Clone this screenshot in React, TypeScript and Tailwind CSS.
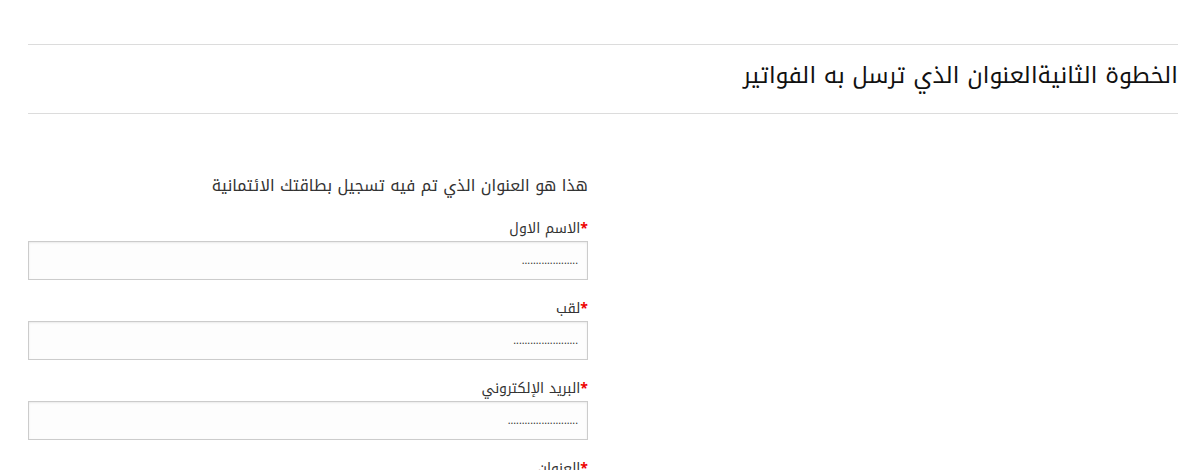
export default function App() {
  const fields = [
    { label: "الاسم الاول", placeholder: "...................." },
    { label: "لقب", placeholder: "......................." },
    { label: "البريد الإلكتروني", placeholder: "........................." },
    { label: "العنوان", placeholder: "........................." },
  ];

  return (
    <div
      dir="rtl"
      className="h-[470px] overflow-hidden bg-white pl-[28px] pr-[22px] pt-[44px] font-['Noto_Kufi_Arabic','Noto_Sans_Arabic','DejaVu_Sans',sans-serif] text-[#222]"
    >
      <div className="border-y border-[#dcdcdc] pb-[21px] pt-[15px]">
        <h2 className="text-[23px] leading-[32px] text-[#111]">
          الخطوة الثانيةالعنوان الذي ترسل به الفواتير
        </h2>
      </div>

      <div className="mr-auto mt-[60px] w-[560px]">
        <p className="text-[16px] leading-[24px] text-[#333]">
          هذا هو العنوان الذي تم فيه تسجيل بطاقتك الائتمانية
        </p>

        <div className="mt-[21px] space-y-[19px]">
          {fields.map((f) => (
            <div key={f.label}>
              <label className="mb-[2px] block text-[14px] leading-[20px] text-[#333]">
                <span className="font-bold text-[#e00]">*</span>
                {f.label}
              </label>
              <input
                className="block h-[39px] w-full border border-[#cccccc] bg-[#fdfdfd] px-[9px] text-[10.5px] text-[#333] shadow-[inset_0_1px_2px_rgba(0,0,0,0.08)] outline-none placeholder:text-[#333]"
                placeholder={f.placeholder}
              />
            </div>
          ))}
        </div>
      </div>
    </div>
  );
}
